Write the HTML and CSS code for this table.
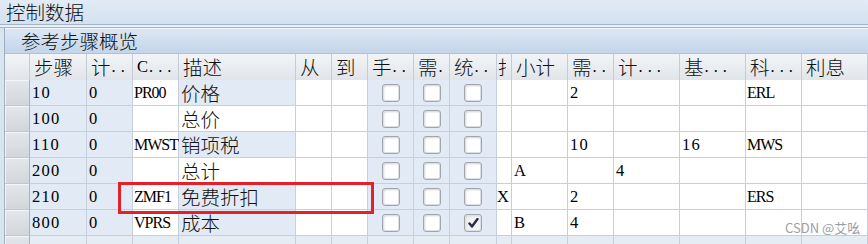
FILE: index.html
```html
<!DOCTYPE html>
<html lang="zh">
<head>
<meta charset="utf-8">
<title>控制数据</title>
<link rel="stylesheet" href="styles.css">
</head>
<body>
<div class="page">
  <div class="titlebar"><span class="zh">控制数据</span></div>
  <div class="sep"></div>
  <div class="panel">
    <div class="panel-head"><span class="zh">参考步骤概览</span></div>
    <div class="grid">
      <div class="h sel"></div>
      <div class="h"><span class="zh">步骤</span></div>
      <div class="h"><span class="zh">计</span><span class="dots">..</span></div>
      <div class="h">C<span class="dots">...</span></div>
      <div class="h"><span class="zh">描述</span></div>
      <div class="h"><span class="zh">从</span></div>
      <div class="h"><span class="zh">到</span></div>
      <div class="h"><span class="zh">手</span><span class="dots">..</span></div>
      <div class="h"><span class="zh">需</span><span class="dots">.</span></div>
      <div class="h"><span class="zh">统</span><span class="dots">..</span></div>
      <div class="h clip"><span class="zh cut">打</span></div>
      <div class="h"><span class="zh">小计</span></div>
      <div class="h"><span class="zh">需</span><span class="dots">..</span></div>
      <div class="h"><span class="zh">计</span><span class="dots">...</span></div>
      <div class="h"><span class="zh">基</span><span class="dots">...</span></div>
      <div class="h"><span class="zh">科</span><span class="dots">...</span></div>
      <div class="h"><span class="zh">利息</span></div>

      <!-- row 10 -->
      <div class="c sel"></div>
      <div class="c b num">10</div>
      <div class="c b num">0</div>
      <div class="c code">PR00</div>
      <div class="c b"><span class="zh">价格</span></div>
      <div class="c"></div>
      <div class="c"></div>
      <div class="c b ck"><span class="cb"></span></div>
      <div class="c b ck"><span class="cb"></span></div>
      <div class="c b ck"><span class="cb"></span></div>
      <div class="c"></div>
      <div class="c"></div>
      <div class="c num">2</div>
      <div class="c"></div>
      <div class="c"></div>
      <div class="c code">ERL</div>
      <div class="c"></div>

      <!-- row 100 -->
      <div class="c sel"></div>
      <div class="c b num">100</div>
      <div class="c b num">0</div>
      <div class="c"></div>
      <div class="c"><span class="zh">总价</span></div>
      <div class="c"></div>
      <div class="c"></div>
      <div class="c b ck"><span class="cb"></span></div>
      <div class="c b ck"><span class="cb"></span></div>
      <div class="c b ck"><span class="cb"></span></div>
      <div class="c"></div>
      <div class="c"></div>
      <div class="c"></div>
      <div class="c"></div>
      <div class="c"></div>
      <div class="c"></div>
      <div class="c"></div>

      <!-- row 110 -->
      <div class="c sel"></div>
      <div class="c b num">110</div>
      <div class="c b num">0</div>
      <div class="c code">MWST</div>
      <div class="c b"><span class="zh">销项税</span></div>
      <div class="c"></div>
      <div class="c"></div>
      <div class="c b ck"><span class="cb"></span></div>
      <div class="c b ck"><span class="cb"></span></div>
      <div class="c b ck"><span class="cb"></span></div>
      <div class="c"></div>
      <div class="c"></div>
      <div class="c num">10</div>
      <div class="c"></div>
      <div class="c num">16</div>
      <div class="c code">MWS</div>
      <div class="c"></div>

      <!-- row 200 -->
      <div class="c sel"></div>
      <div class="c b num">200</div>
      <div class="c b num">0</div>
      <div class="c"></div>
      <div class="c"><span class="zh">总计</span></div>
      <div class="c"></div>
      <div class="c"></div>
      <div class="c b ck"><span class="cb"></span></div>
      <div class="c b ck"><span class="cb"></span></div>
      <div class="c b ck"><span class="cb"></span></div>
      <div class="c"></div>
      <div class="c">A</div>
      <div class="c"></div>
      <div class="c num">4</div>
      <div class="c"></div>
      <div class="c"></div>
      <div class="c"></div>

      <!-- row 210 -->
      <div class="c sel"></div>
      <div class="c b num">210</div>
      <div class="c b num">0</div>
      <div class="c code">ZMF1</div>
      <div class="c b"><span class="zh">免费折扣</span></div>
      <div class="c"></div>
      <div class="c"></div>
      <div class="c b ck"><span class="cb"></span></div>
      <div class="c b ck"><span class="cb"></span></div>
      <div class="c b ck"><span class="cb"></span></div>
      <div class="c narrow">X</div>
      <div class="c"></div>
      <div class="c num">2</div>
      <div class="c"></div>
      <div class="c"></div>
      <div class="c code">ERS</div>
      <div class="c"></div>

      <!-- row 800 -->
      <div class="c sel"></div>
      <div class="c b num">800</div>
      <div class="c b num">0</div>
      <div class="c code">VPRS</div>
      <div class="c b"><span class="zh">成本</span></div>
      <div class="c"></div>
      <div class="c"></div>
      <div class="c b ck"><span class="cb"></span></div>
      <div class="c b ck"><span class="cb"></span></div>
      <div class="c b ck"><span class="cb on"><svg width="11" height="10" viewBox="0 0 11 10"><path d="M1.5 5.5 L4 8.5 L9.5 1" fill="none" stroke="#262b45" stroke-width="2.4" stroke-linecap="round" stroke-linejoin="round"/></svg></span></div>
      <div class="c"></div>
      <div class="c">B</div>
      <div class="c num">4</div>
      <div class="c"></div>
      <div class="c"></div>
      <div class="c"></div>
      <div class="c"></div>

      <!-- empty row -->
      <div class="c sel"></div>
      <div class="c e"></div><div class="c e"></div><div class="c e"></div><div class="c e"></div>
      <div class="c e"></div><div class="c e"></div><div class="c e"></div><div class="c e"></div>
      <div class="c e"></div><div class="c e"></div><div class="c e"></div><div class="c e"></div>
      <div class="c e"></div><div class="c e"></div><div class="c e"></div><div class="c e"></div>
    </div>
  </div>
  <div class="highlight"></div>
  <div class="watermark">CSDN @艾吆</div>
</div>
</body>
</html>
```

FILE: styles.css
```css
* { box-sizing: border-box; }
html, body { margin: 0; padding: 0; }
body {
  width: 868px;
  height: 244px;
  overflow: hidden;
  background: #d9e4f1;
  font-family: "Liberation Serif", "Noto Sans CJK SC", serif;
  font-size: 16.5px;
  line-height: 20px;
  color: #000;
}
.page { position: relative; width: 868px; height: 244px; overflow: hidden; }

.zh {
  font-family: "Noto Sans CJK SC", "Noto Sans", sans-serif;
  font-size: 19.5px;
  font-weight: 300;
  line-height: 22px;
  color: #111;
}

.titlebar {
  height: 24px;
  padding-left: 6px;
  display: flex;
  align-items: center;
  background: linear-gradient(#e2ebf6, #d4e1f0);
}
.sep {
  height: 4px;
  border-top: 1px solid #a4b6cb;
  border-bottom: 1px solid #a4b6cb;
  background: #eaf0f7;
}

.panel {
  margin-left: 4px;
  border-left: 1px solid #9fafc2;
  background: #fff;
}
.panel-head {
  height: 26px;
  padding-left: 16px;
  display: flex;
  align-items: center;
  background: linear-gradient(#dce7f4, #c3d5ea);
  border-top: 1px solid #f2f6fb;
  border-bottom: 1px solid #b3c1d1;
}

.grid {
  display: grid;
  grid-template-columns: 25px 57px 46px 46px 117px 36px 36px 46px 36px 47px 15px 56px 46px 66px 66px 56px 66px;
  grid-auto-rows: 26px;
}
.h {
  height: 27px;
  display: flex;
  align-items: center;
  padding-left: 4px;
  white-space: nowrap;
  background: linear-gradient(#f2f4f7, #e1e5ea);
  border-right: 1px solid #c5ccd6;
  border-bottom: 1px solid #b8c1cc;
}
.h.clip { padding-left: 1px; }
.cut { display: block; width: 8px; overflow: hidden; }
.dots { letter-spacing: 5px; margin-left: 1px; }

.c {
  display: flex;
  align-items: center;
  padding-left: 2px;
  white-space: nowrap;
  background: #fff;
  border-right: 1px solid #c6cfdb;
  border-bottom: 1px solid #c6cfdb;
}
.c.num { letter-spacing: 1.3px; }
.c.code { font-size: 16px; letter-spacing: -1px; padding-left: 1px; }
.c.b { background: #e2eaf5; }
.c.e { background: #e6ecf4; }
.c.narrow { padding-left: 0; }
.c.ck { justify-content: center; padding-left: 0; }

.sel {
  background: linear-gradient(#e3e6ea, #d2d6dc);
  border-right: 1px solid #a9b2be;
  border-bottom: 1px solid #c0c7d0;
  box-shadow: inset 1px 1px 0 #f4f6f8;
}
.h.sel { background: linear-gradient(#f2f4f7, #e1e5ea); border-right: 1px solid #c5ccd6; box-shadow: none; }

.cb {
  width: 18px;
  height: 18px;
  border: 1px solid #a2a6ab;
  border-radius: 3px;
  background: #fff;
  box-shadow: inset 0 0 0 1px #dcdfe3, inset 1px 1px 2px #c9cdd2;
  display: flex;
  align-items: center;
  justify-content: center;
}
.cb.on { background: #f1f2f4; }

.highlight {
  position: absolute;
  left: 118px;
  top: 182px;
  width: 256px;
  height: 32px;
  border: 3px solid #e4202b;
}
.watermark {
  position: absolute;
  left: 785px;
  top: 220px;
  font-family: "Noto Sans CJK SC", "Noto Sans", sans-serif;
  font-size: 13px;
  line-height: 16px;
  color: #9a9ea4;
}
```
